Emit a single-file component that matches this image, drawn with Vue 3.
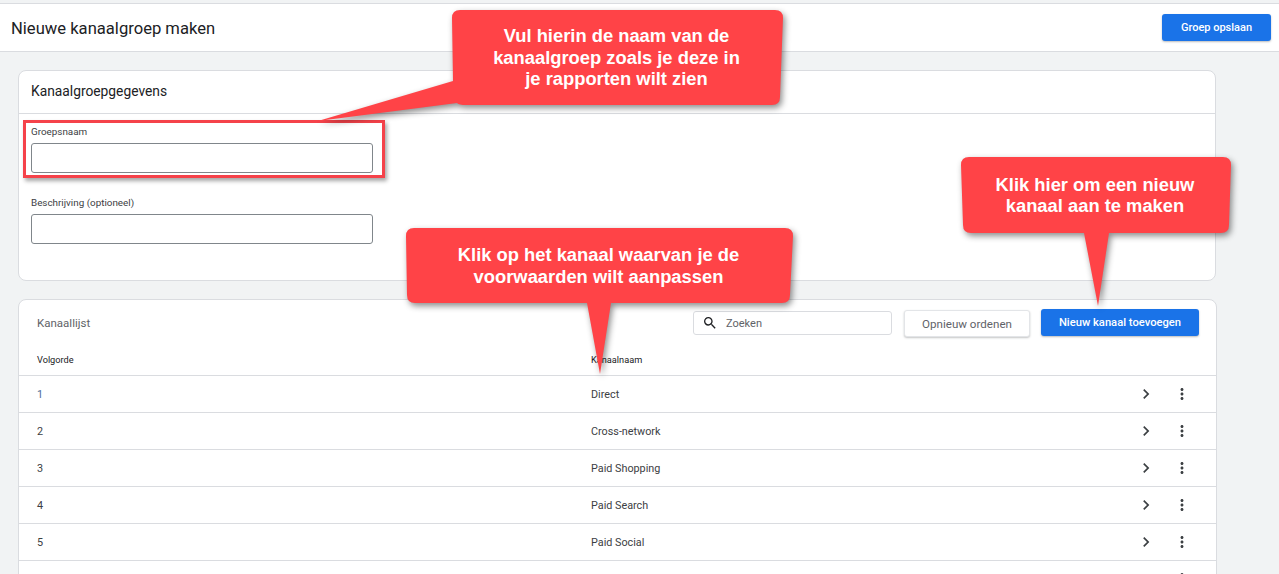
<template>
  <div class="page">
    <header class="topbar">
      <h1 class="page-title">Nieuwe kanaalgroep maken</h1>
      <button class="btn btn-primary btn-save">Groep opslaan</button>
    </header>

    <main class="content">
      <section class="card card-details">
        <h2 class="card-title">Kanaalgroepgegevens</h2>
        <div class="form">
          <label class="field">
            <span class="field-label">Groepsnaam</span>
            <input class="field-input" type="text">
          </label>
          <label class="field">
            <span class="field-label">Beschrijving (optioneel)</span>
            <input class="field-input" type="text">
          </label>
        </div>
      </section>

      <section class="card card-list">
        <div class="list-toolbar">
          <h2 class="list-title">Kanaallijst</h2>
          <div class="search">
            <svg class="search-icon" viewBox="0 0 24 24" width="16" height="16">
              <path d="M15.5 14h-.79l-.28-.27A6.47 6.47 0 0 0 16 9.5 6.5 6.5 0 1 0 9.5 16c1.61 0 3.09-.59 4.23-1.57l.27.28v.79l5 4.99L20.49 19l-4.99-5zm-6 0C7.01 14 5 11.99 5 9.5S7.01 5 9.5 5 14 7.01 14 9.5 11.99 14 9.5 14z" />
            </svg>
            <span class="search-text">Zoeken</span>
          </div>
          <button class="btn btn-outline">Opnieuw ordenen</button>
          <button class="btn btn-primary btn-add">Nieuw kanaal toevoegen</button>
        </div>

        <div class="table-row table-head">
          <span>Volgorde</span>
          <span>Kanaalnaam</span>
        </div>
        <div class="table-row" v-for="(channel, index) in channels" :key="index">
          <span class="row-number" :class="{ 'row-number--first': index === 0 }">{{ channel ? index + 1 : '' }}</span>
          <span class="row-name">{{ channel }}</span>
          <span class="row-actions">
            <svg viewBox="0 0 24 24" width="20" height="20">
              <path d="M10 6L8.59 7.41 13.17 12l-4.58 4.59L10 18l6-6z" />
            </svg>
            <svg viewBox="0 0 24 24" width="18" height="18">
              <path d="M12 8c1.1 0 2-.9 2-2s-.9-2-2-2-2 .9-2 2 .9 2 2 2zm0 2c-1.1 0-2 .9-2 2s.9 2 2 2 2-.9 2-2-.9-2-2-2zm0 6c-1.1 0-2 .9-2 2s.9 2 2 2 2-.9 2-2-.9-2-2-2z" />
            </svg>
          </span>
        </div>
      </section>
    </main>

    <div class="highlight"></div>

    <div class="callout callout-name">
      <svg class="callout-shape" viewBox="0 0 331 95">
        <path d="M8 0H323Q331 0 331 8L328 87Q328 95 320 95H14Q7 95 5 93L-134 111L1 71L0 8Q0 0 8 0Z" />
      </svg>
      <p class="callout-text">Vul hierin de naam van de<br>kanaalgroep zoals je deze in<br>je rapporten wilt zien</p>
    </div>

    <div class="callout callout-add">
      <svg class="callout-shape" viewBox="0 0 270 76">
        <path d="M8 0H262Q270 0 270 8L268 68Q268 76 260 76H148L137 149L123 76H10Q2 76 2 68L0 8Q0 0 8 0Z" />
      </svg>
      <p class="callout-text">Klik hier om een nieuw<br>kanaal aan te maken</p>
    </div>

    <div class="callout callout-edit">
      <svg class="callout-shape" viewBox="0 0 387 75">
        <path d="M8 0H379Q387 0 387 8L384 67Q384 75 376 75H205L194 146L181 75H9Q1 75 1 67L0 8Q0 0 8 0Z" />
      </svg>
      <p class="callout-text">Klik op het kanaal waarvan je de<br>voorwaarden wilt aanpassen</p>
    </div>
  </div>
</template>

<script setup>
// last row only shows its icons, the page is cut off there
const channels = [
  'Direct',
  'Cross-network',
  'Paid Shopping',
  'Paid Search',
  'Paid Social',
  ''
]
</script>

<style>
html,
body {
  margin: 0;
  overflow: hidden;
}
</style>

<style scoped>
.page {
  position: relative;
  height: 574px;
  overflow: hidden;
  background: #f1f3f4;
  font-family: Roboto, sans-serif;
  color: #3c4043;
}

.topbar {
  display: flex;
  align-items: center;
  justify-content: space-between;
  box-sizing: border-box;
  height: 49px;
  margin-top: 3px;
  padding: 0 8px 0 11px;
  background: #fff;
  border-top: 1px solid #dadce0;
  border-bottom: 1px solid #dadce0;
}

.page-title {
  margin: 0;
  padding-top: 1px;
  font-size: 16.6px;
  font-weight: 400;
  color: #202124;
}

.btn {
  box-sizing: border-box;
  border-radius: 3px;
  font-family: Roboto, sans-serif;
  font-size: 11px;
  font-weight: 500;
  padding: 0;
}

.btn-primary {
  border: 0;
  background: #1a73e8;
  color: #fff;
  box-shadow: 0 1px 2px rgba(60, 64, 67, 0.35);
}

.btn-save {
  width: 109px;
  height: 27px;
}

.btn-add {
  width: 158px;
  height: 27px;
  font-size: 11.2px;
}

.btn-outline {
  width: 126px;
  height: 27px;
  margin: 1px 11px 0 12px;
  background: #fff;
  border: 1px solid #e3e5e8;
  color: #5f6368;
  font-size: 11.6px;
  font-weight: 400;
  box-shadow: 0 1px 2px rgba(60, 64, 67, 0.3);
}

.content {
  padding: 18px 0 0 18px;
}

.card {
  box-sizing: border-box;
  background: #fff;
  border: 1px solid #dadce0;
  border-radius: 8px;
}

.card-details {
  width: 1198px;
  height: 211px;
}

.card-title {
  box-sizing: border-box;
  height: 43px;
  margin: 0;
  padding: 0 12px;
  border-bottom: 1px solid #dadce0;
  font-size: 13.8px;
  font-weight: 400;
  line-height: 41px;
  color: #202124;
}

.form {
  display: flex;
  flex-direction: column;
  gap: 23px;
  padding: 12px 12px 0;
}

.field {
  display: flex;
  flex-direction: column;
  gap: 5px;
  width: 342px;
}

.field-label {
  font-size: 9.85px;
  line-height: 12px;
  color: #3c4043;
}

.field + .field .field-label {
  margin-top: 1px;
}

.field-input {
  box-sizing: border-box;
  width: 100%;
  height: 30px;
  margin: 0;
  background: #fff;
  border: 1px solid #80868b;
  border-radius: 3px;
}

.card-list {
  width: 1199px;
  height: 300px;
  margin-top: 18px;
  overflow: hidden;
}

.list-toolbar {
  display: flex;
  align-items: flex-start;
  box-sizing: content-box;
  height: 27px;
  padding: 9px 17px 0 18px;
}

.list-title {
  flex: 1;
  margin: 0;
  font-size: 11.5px;
  font-weight: 400;
  line-height: 28px;
  color: #5f6368;
}

.search {
  display: flex;
  align-items: center;
  box-sizing: border-box;
  width: 199px;
  height: 24px;
  margin-top: 2px;
  padding-left: 8px;
  border: 1px solid #dadce0;
  border-radius: 3px;
}

.search-icon {
  fill: #202124;
}

.search-text {
  margin-left: 8px;
  font-size: 11px;
  color: #5f6368;
}

.table-row {
  display: grid;
  grid-template-columns: 554px 1fr auto;
  align-items: center;
  box-sizing: border-box;
  height: 37px;
  padding: 0 25px 0 18px;
  border-bottom: 1px solid #dadce0;
  font-size: 10.8px;
  color: #3c4043;
}

.table-head {
  height: 40px;
  padding-top: 7px;
  font-size: 9.2px;
  font-weight: 400;
  color: #202124;
}

.row-number--first {
  color: #4a6d9a;
}

.row-actions {
  display: flex;
  align-items: center;
  gap: 17px;
  fill: #3c4043;
}

.highlight {
  position: absolute;
  left: 23px;
  top: 120px;
  box-sizing: border-box;
  width: 362px;
  height: 58px;
  border: 3px solid #f5424a;
  box-shadow: 2px 3px 4px rgba(0, 0, 0, 0.35);
}

.callout {
  position: absolute;
  display: flex;
  align-items: center;
  justify-content: center;
  padding-right: 2px;
  box-sizing: border-box;
}

.callout-shape {
  position: absolute;
  inset: 0;
  width: 100%;
  height: 100%;
  overflow: visible;
  fill: #ff4347;
  filter: drop-shadow(2px 3px 3px rgba(0, 0, 0, 0.45));
}

.callout-text {
  position: relative;
  margin: 0;
  font-family: "Liberation Sans", Arial, sans-serif;
  font-size: 18.35px;
  font-weight: 700;
  line-height: 21.5px;
  text-align: center;
  white-space: nowrap;
  color: #fff;
}

.callout-name {
  left: 452px;
  top: 10px;
  width: 331px;
  height: 95px;
}

.callout-add {
  left: 961px;
  top: 157px;
  width: 270px;
  height: 76px;
}

.callout-edit {
  left: 406px;
  top: 228px;
  width: 387px;
  height: 75px;
}
</style>
